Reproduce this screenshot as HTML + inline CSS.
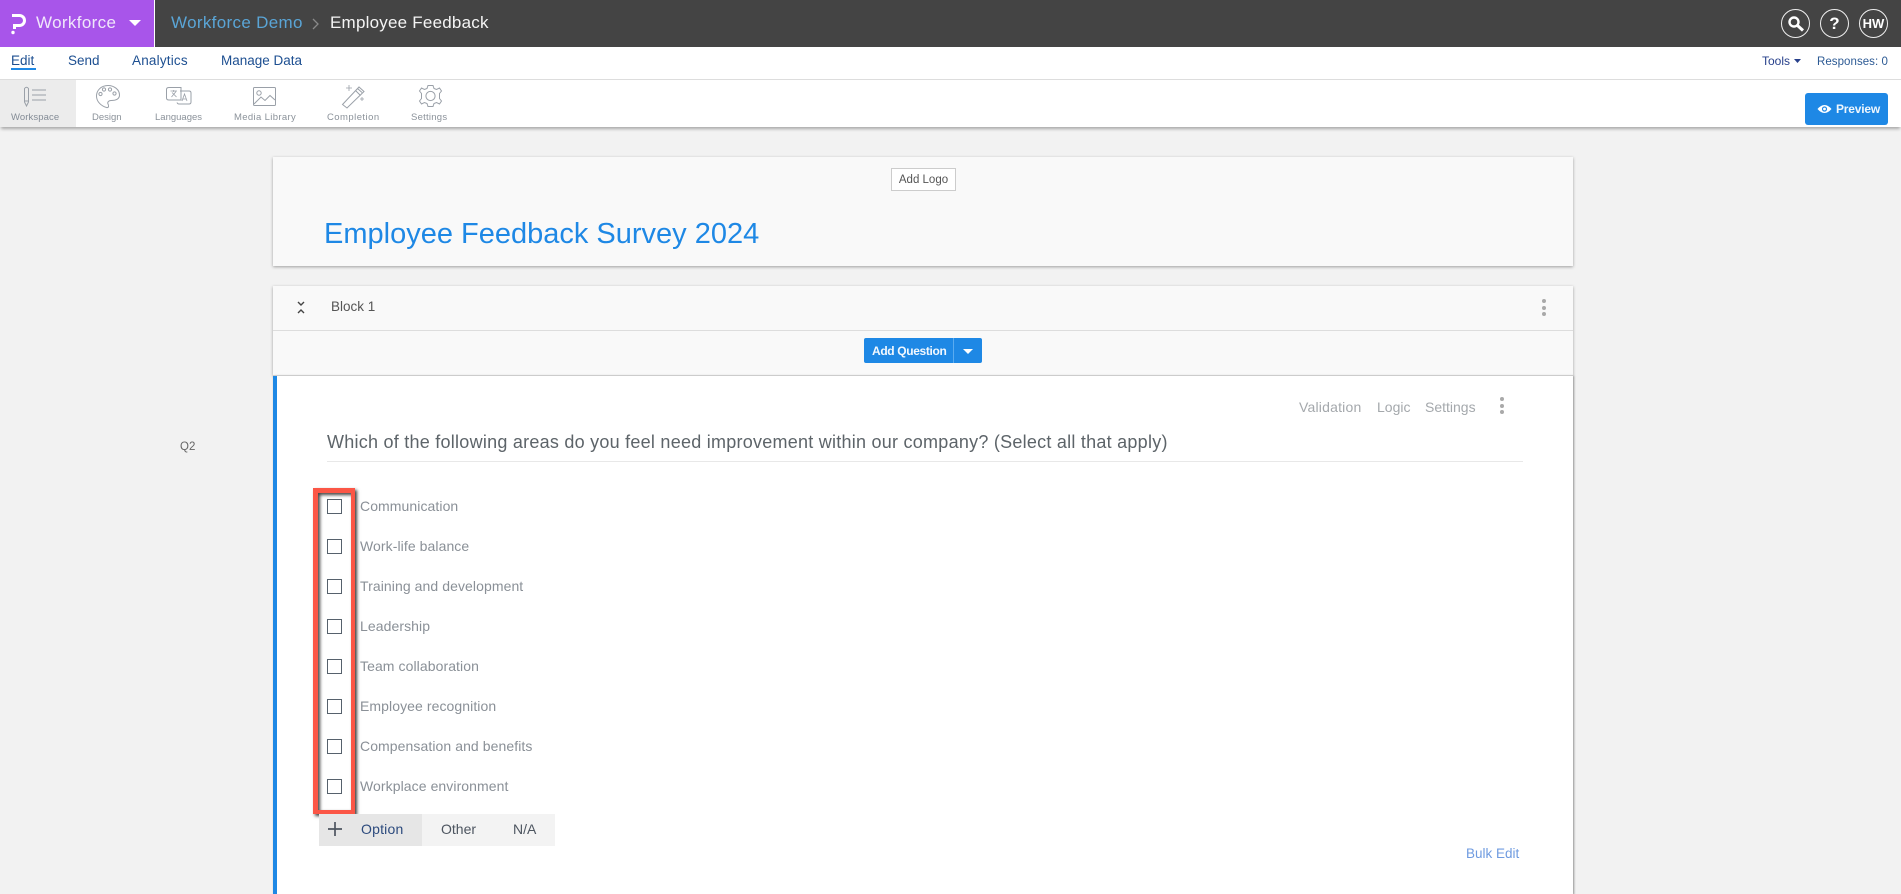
<!DOCTYPE html>
<html lang="en">
<head>
<meta charset="utf-8">
<title>Employee Feedback</title>
<style>
html,body{margin:0;padding:0;width:1901px;height:894px;overflow:hidden;background:#f2f2f2;font-family:"Liberation Sans",sans-serif}
.a,.t{position:absolute}
.t{white-space:nowrap;line-height:20px;height:20px}
.card{background:#f9f9f9;box-shadow:0 1px 3px rgba(0,0,0,.35)}
.nav{font-size:13.5px;color:#1d4f91;top:51px}
.lbl{font-size:9.5px;color:#8b929a;top:108px}
.opt{font-size:14px;letter-spacing:.08px;color:#8a9097;left:360px}
.cb{position:absolute;left:327px;width:13px;height:13px;border:1.5px solid #56616c;background:#fff}
.act{font-size:14px;color:#a4a8ac;top:397px}
.dot{position:absolute;width:4px;height:4px;border-radius:50%;background:#a9a9a9}
.circ{position:absolute;top:9px;width:27px;height:27px;border:1.5px solid #eee;border-radius:50%;color:#fff;font-weight:bold;text-align:center}
</style>
</head>
<body>
<div style="position:absolute;left:0;top:0;width:1901px;height:894px;overflow:hidden">
<div class="a" style="left:0;top:0;width:1901px;height:47px;background:#444"></div>
<div class="a" style="left:0;top:0;width:154px;height:47px;background:#a855ea"></div>
<div class="a" style="left:154px;top:0;width:1px;height:47px;background:#fff"></div>
<svg class="a" style="left:9px;top:12px" width="18" height="24" viewBox="0 0 18 24"><path d="M3 3.5H10.5A4.8 4.8 0 0 1 10.5 13.5H5.5V17" fill="none" stroke="#fff" stroke-width="3"/><circle cx="4" cy="20.5" r="1.7" fill="#fff"/></svg>
<div class="t" style="left:36px;top:13px;font-size:17px;letter-spacing:.35px;color:#f0e6fb">Workforce</div>
<svg class="a" style="left:129px;top:20px" width="12" height="6"><path d="M0 0H12L6 6Z" fill="#fff"/></svg>
<div class="t" style="left:171px;top:13px;font-size:17px;letter-spacing:.33px;color:#5aa5d6">Workforce Demo</div>
<svg class="a" style="left:311px;top:17px" width="9" height="14"><path d="M2 2L7 7L2 12" fill="none" stroke="#8a8a8a" stroke-width="1.3"/></svg>
<div class="t" style="left:330px;top:13px;font-size:17px;letter-spacing:.22px;color:#f4f4f4">Employee Feedback</div>
<div class="circ" style="left:1781px"><svg width="27" height="27" viewBox="0 0 27 27"><circle cx="12" cy="12" r="4.5" fill="none" stroke="#fff" stroke-width="2.4"/><path d="M15.5 15.5L21 20.5" stroke="#fff" stroke-width="3"/></svg></div>
<div class="circ" style="left:1820px;font-size:17px;line-height:27px">?</div>
<div class="circ" style="left:1859px;font-size:13px;line-height:27px">HW</div>

<div class="a" style="left:0;top:80px;width:1901px;height:47px;background:#fff;box-shadow:0 3px 3px -1px rgba(0,0,0,.3)"></div>
<div class="a" style="left:0;top:47px;width:1901px;height:32px;background:#fff;border-bottom:1px solid #ddd"></div>
<div class="t nav" style="left:11px">Edit</div>
<div class="a" style="left:11px;top:68px;width:25px;height:2px;background:#1e88e5"></div>
<div class="t nav" style="left:68px">Send</div>
<div class="t nav" style="left:132px;letter-spacing:.2px">Analytics</div>
<div class="t nav" style="left:221px">Manage Data</div>
<div class="t" style="left:1762px;top:51px;font-size:12px;color:#27408b">Tools</div>
<svg class="a" style="left:1794px;top:59px" width="7" height="4"><path d="M0 0H7L3.5 4Z" fill="#27408b"/></svg>
<div class="t" style="left:1817px;top:51.5px;font-size:11.5px;letter-spacing:.05px;color:#2c5a94">Responses: 0</div>

<div class="a" style="left:0;top:80px;width:76px;height:47px;background:#ececec"></div>
<svg class="a" style="left:0;top:0" width="480" height="120" viewBox="0 0 480 120" fill="none" stroke="#9aa0a8" stroke-width="1">
<path d="M24.5 88.5Q26.5 86 28.5 88.5V102L26.5 106L24.5 102ZM24.5 101H28.5"/><path d="M32 90H46M32 95H46M32 100H46"/>
<path d="M108 85.5C101 85.5 96.5 90.5 96.5 96C96.5 102 101.5 106 106.5 107.5C109 108 109 105.5 108 104C107 102 109 100.5 111 100.5C116 100.5 119.5 99 119.5 95C119.5 89.5 114 85.5 108 85.5Z"/><circle cx="104" cy="89.5" r="1.6"/><circle cx="110" cy="89.5" r="1.6"/><circle cx="114.5" cy="93.5" r="1.6"/><circle cx="100.5" cy="94" r="1.6"/>
<path d="M169 87.5H181V100H169Q166.5 100 166.5 98V89.5Q166.5 87.5 169 87.5Z"/><path d="M180 91H189Q191 91 191 93V102Q191 104 189 104H179Q177.5 104 177 102.5"/>
<path d="M170.5 91H177M173.7 90V92M171.5 97L176 91.5M172 92.5L176.5 97M182 101L184.5 94L187 101M183 99H186" stroke-width=".8"/>
<rect x="253.5" y="87.5" width="22" height="18" rx="1"/><circle cx="259" cy="93" r="2.2"/><path d="M254 104L261 97L265 100.5L270 95.5L275 100"/>
<path d="M342.5 104.5L359 87L364 91.5L347 108Z"/><path d="M355.5 90.5L360.5 95.5M357.5 88.5L362 92.5"/><path d="M349 85V91M346 88H352M362 97V101M360 99H364" stroke-width=".8"/>
<path d="M428 85.5H433L434 88.5L436.5 89.5L439.5 88L441.5 91L439.5 93.5V98.5L441.5 101L439.5 104L436.5 102.5L434 103.5L433 106.5H428L427 103.5L424.5 102.5L421.5 104L419.5 101L421.5 98.5V93.5L419.5 91L421.5 88L424.5 89.5L427 88.5Z"/><circle cx="430.5" cy="96" r="4.6"/>
</svg>
<div class="t lbl" style="left:11px;letter-spacing:.1px;color:#848c96">Workspace</div>
<div class="t lbl" style="left:92px">Design</div>
<div class="t lbl" style="left:155px">Languages</div>
<div class="t lbl" style="left:234px;letter-spacing:.35px">Media Library</div>
<div class="t lbl" style="left:327px;letter-spacing:.45px">Completion</div>
<div class="t lbl" style="left:411px;letter-spacing:.25px">Settings</div>
<div class="a" style="left:1805px;top:93px;width:83px;height:32px;border-radius:3px;background:#1e88e5"></div>
<svg class="a" style="left:1817px;top:103px" width="15" height="12" viewBox="0 0 15 12"><path d="M.5 6Q7.5-2 14.5 6Q7.5 14 .5 6Z" fill="#fff"/><circle cx="7.5" cy="6" r="2.6" fill="#1e88e5"/><circle cx="7.5" cy="6" r="1.4" fill="#fff"/></svg>
<div class="t" style="left:1836px;top:99px;font-size:12px;font-weight:bold;color:#eef6fd;letter-spacing:-.2px">Preview</div>

<div class="a card" style="left:273px;top:157px;width:1300px;height:109px"></div>
<div class="t" style="left:891px;top:168px;width:63px;height:21px;line-height:22px;border:1px solid #ccc;background:#fff;font-size:11.5px;color:#555;text-align:center">Add Logo</div>
<div class="t" style="left:324px;top:217px;height:34px;line-height:34px;font-size:29px;color:#1e88e5">Employee Feedback Survey 2024</div>

<div class="a card" style="left:273px;top:286px;width:1300px;height:89px"></div>
<div class="a" style="left:273px;top:330px;width:1300px;height:1px;background:#ddd"></div>
<svg class="a" style="left:297px;top:301px" width="9" height="14"><path d="M1 1L4 4L7 1M1 12L4 9L7 12" fill="none" stroke="#444" stroke-width="1.4"/></svg>
<div class="t" style="left:331px;top:297px;font-size:13.5px;color:#555">Block 1</div>
<div class="dot" style="left:1542px;top:299px"></div><div class="dot" style="left:1542px;top:305.5px"></div><div class="dot" style="left:1542px;top:312px"></div>
<div class="a" style="left:864px;top:338px;width:118px;height:25px;border-radius:2px;background:#1e88e5"></div>
<div class="a" style="left:953px;top:338px;width:1px;height:25px;background:#5aabf0"></div>
<div class="t" style="left:872px;top:340.5px;font-size:12px;font-weight:bold;color:#f2f8fe;letter-spacing:-.35px">Add Question</div>
<svg class="a" style="left:963px;top:349px" width="10" height="5"><path d="M0 0H10L5 5Z" fill="#fff"/></svg>

<div class="a" style="left:273px;top:375px;width:1300px;height:518px;background:#fff;box-shadow:1px 1px 2px rgba(0,0,0,.4);border-top:1px solid #ccc"></div>
<div class="a" style="left:273px;top:376px;width:4px;height:518px;background:#1e88e5"></div>
<div class="t act" style="left:1299px;letter-spacing:.2px">Validation</div>
<div class="t act" style="left:1377px">Logic</div>
<div class="t act" style="left:1425px">Settings</div>
<div class="dot" style="left:1500px;top:397px"></div><div class="dot" style="left:1500px;top:403.5px"></div><div class="dot" style="left:1500px;top:410px"></div>
<div class="t" style="left:180px;top:437px;font-size:11.5px;color:#666">Q2</div>
<div class="t" style="left:327px;top:432px;font-size:18px;letter-spacing:.25px;color:#5d6469">Which of the following areas do you feel need improvement within our company? (Select all that apply)</div>
<div class="a" style="left:327px;top:461px;width:1196px;height:1px;background:#e8e8e8"></div>

<div class="cb" style="top:499px"></div><div class="t opt" style="top:496px">Communication</div>
<div class="cb" style="top:539px"></div><div class="t opt" style="top:536px">Work-life balance</div>
<div class="cb" style="top:579px"></div><div class="t opt" style="top:576px">Training and development</div>
<div class="cb" style="top:619px"></div><div class="t opt" style="top:616px">Leadership</div>
<div class="cb" style="top:659px"></div><div class="t opt" style="top:656px">Team collaboration</div>
<div class="cb" style="top:699px"></div><div class="t opt" style="top:696px">Employee recognition</div>
<div class="cb" style="top:739px"></div><div class="t opt" style="top:736px">Compensation and benefits</div>
<div class="cb" style="top:779px"></div><div class="t opt" style="top:776px">Workplace environment</div>

<div class="a" style="left:313px;top:488px;width:33px;height:317px;border:solid #fb5646;border-width:5px 4px 4px 5px;box-shadow:2px 2px 3px rgba(0,0,0,.75),inset 2px 2px 3px rgba(0,0,0,.75)"></div>

<div class="a" style="left:319px;top:814px;width:236px;height:32px;background:#f3f3f3"></div>
<div class="a" style="left:319px;top:814px;width:103px;height:32px;background:#e6e6e6"></div>
<svg class="a" style="left:327px;top:821px" width="16" height="16"><path d="M8 1V15M1 8H15" stroke="#4d5560" stroke-width="1.7"/></svg>
<div class="t" style="left:361px;top:819px;font-size:14px;letter-spacing:.2px;color:#2c4a7d">Option</div>
<div class="t" style="left:441px;top:819px;font-size:14px;color:#4d5560">Other</div>
<div class="t" style="left:513px;top:819px;font-size:14px;color:#4d5560">N/A</div>
<div class="t" style="left:1466px;top:844px;font-size:13.5px;color:#6f9be0">Bulk Edit</div>
</div>
</body>
</html>
